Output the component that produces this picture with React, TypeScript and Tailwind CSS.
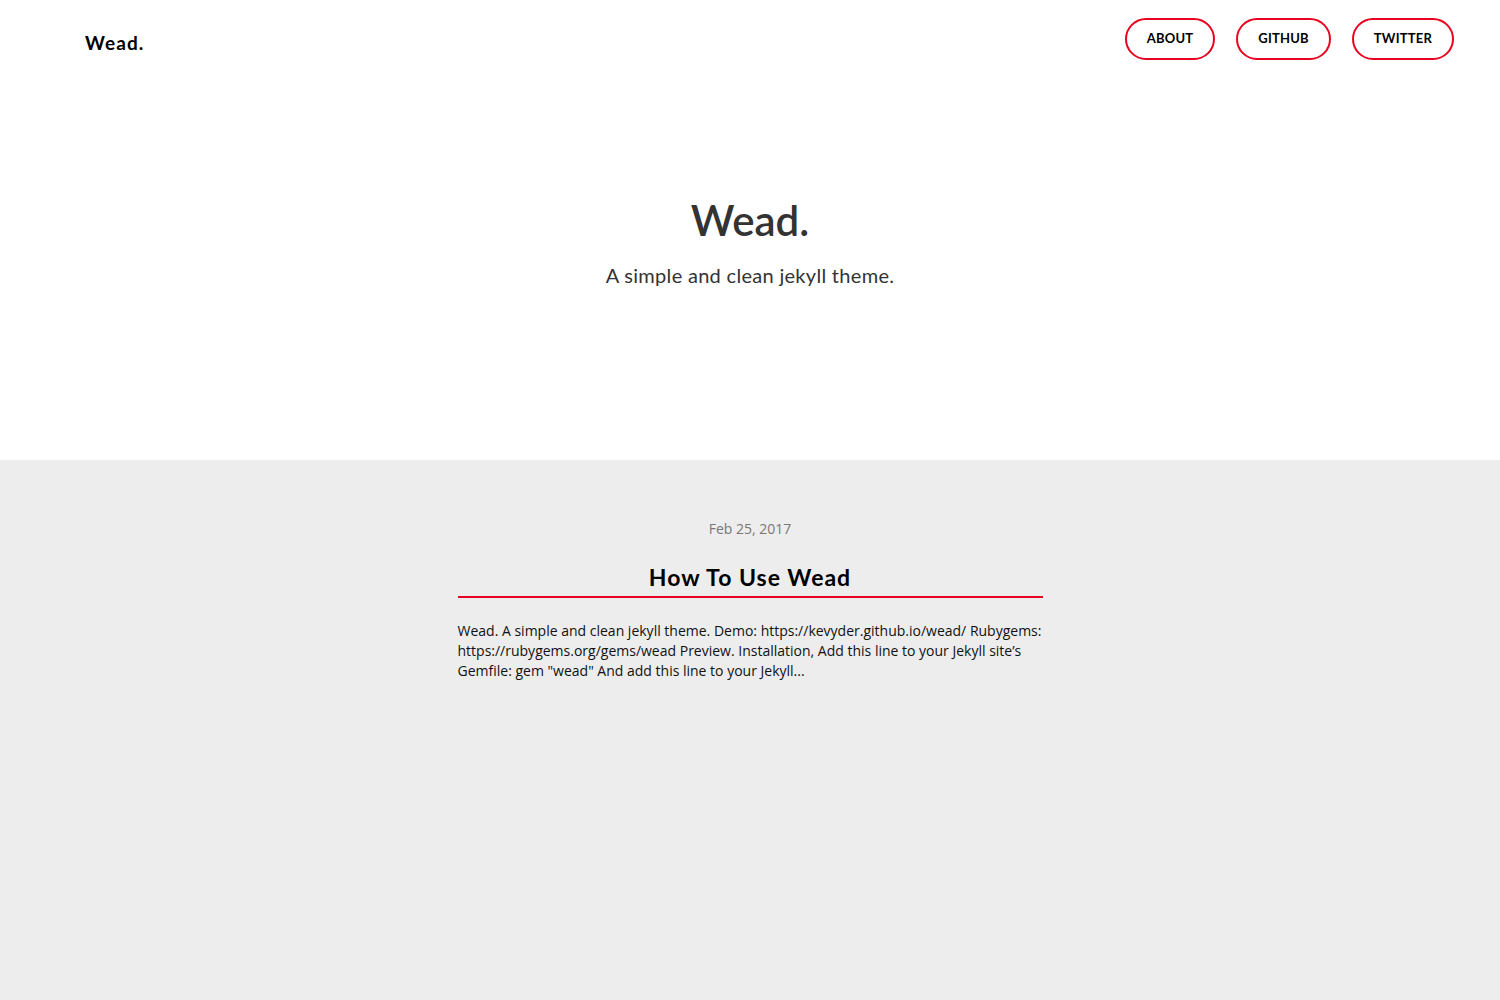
export default function App() {
  const links = ["ABOUT", "GITHUB", "TWITTER"];
  return (
    <div className="min-h-[1000px] flex flex-col bg-white" style={{ fontFamily: "'Open Sans', sans-serif" }}>
      {/* Header */}
      <header className="h-[78px] flex items-start justify-between pl-[85px] pr-[46px]">
        <a
          href="/"
          className="mt-[30px] text-[19px] font-bold text-black leading-[26px] tracking-[1.1px]"
          style={{ fontFamily: "Lato, sans-serif" }}
        >
          Wead.
        </a>
        <nav className="mt-[18px] flex gap-[21px]">
          {links.map((l) => (
            <a
              key={l}
              href="#"
              className="h-[42px] px-[20px] flex items-center border-2 border-[#e8031f] rounded-full text-[13px] font-bold text-black tracking-[0.2px]"
              style={{ fontFamily: "Lato, sans-serif" }}
            >
              {l}
            </a>
          ))}
        </nav>
      </header>

      {/* Hero */}
      <section className="h-[382px] flex flex-col items-center pt-[114px] text-[#333]" style={{ fontFamily: "Lato, sans-serif" }}>
        <h1 className="text-[42px] leading-[56px] font-semibold">Wead.</h1>
        <p className="mt-[13px] text-[20px] leading-[28px] tracking-[0.3px]">A simple and clean jekyll theme.</p>
      </section>

      {/* Posts */}
      <main className="flex-1 bg-[#ededed] flex flex-col items-center pt-[59px]">
        <article className="w-[585px] flex flex-col items-center">
          <time className="text-[14px] leading-[20px] text-[#777]">Feb 25, 2017</time>
          <h2
            className="mt-[23px] w-full text-center text-[23px] leading-[30px] font-bold text-black border-b-2 border-[#e8031f] pb-[4px] tracking-[1px]"
            style={{ fontFamily: "Lato, sans-serif" }}
          >
            How To Use Wead
          </h2>
          <p className="mt-[23px] text-[14px] leading-[20px] text-[#111]">
            Wead. A simple and clean jekyll theme. Demo: https://kevyder.github.io/wead/ Rubygems: https://rubygems.org/gems/wead Preview. Installation, Add this line to your Jekyll site’s Gemfile: gem "wead" And add this line to your Jekyll...
          </p>
        </article>
      </main>
    </div>
  );
}
